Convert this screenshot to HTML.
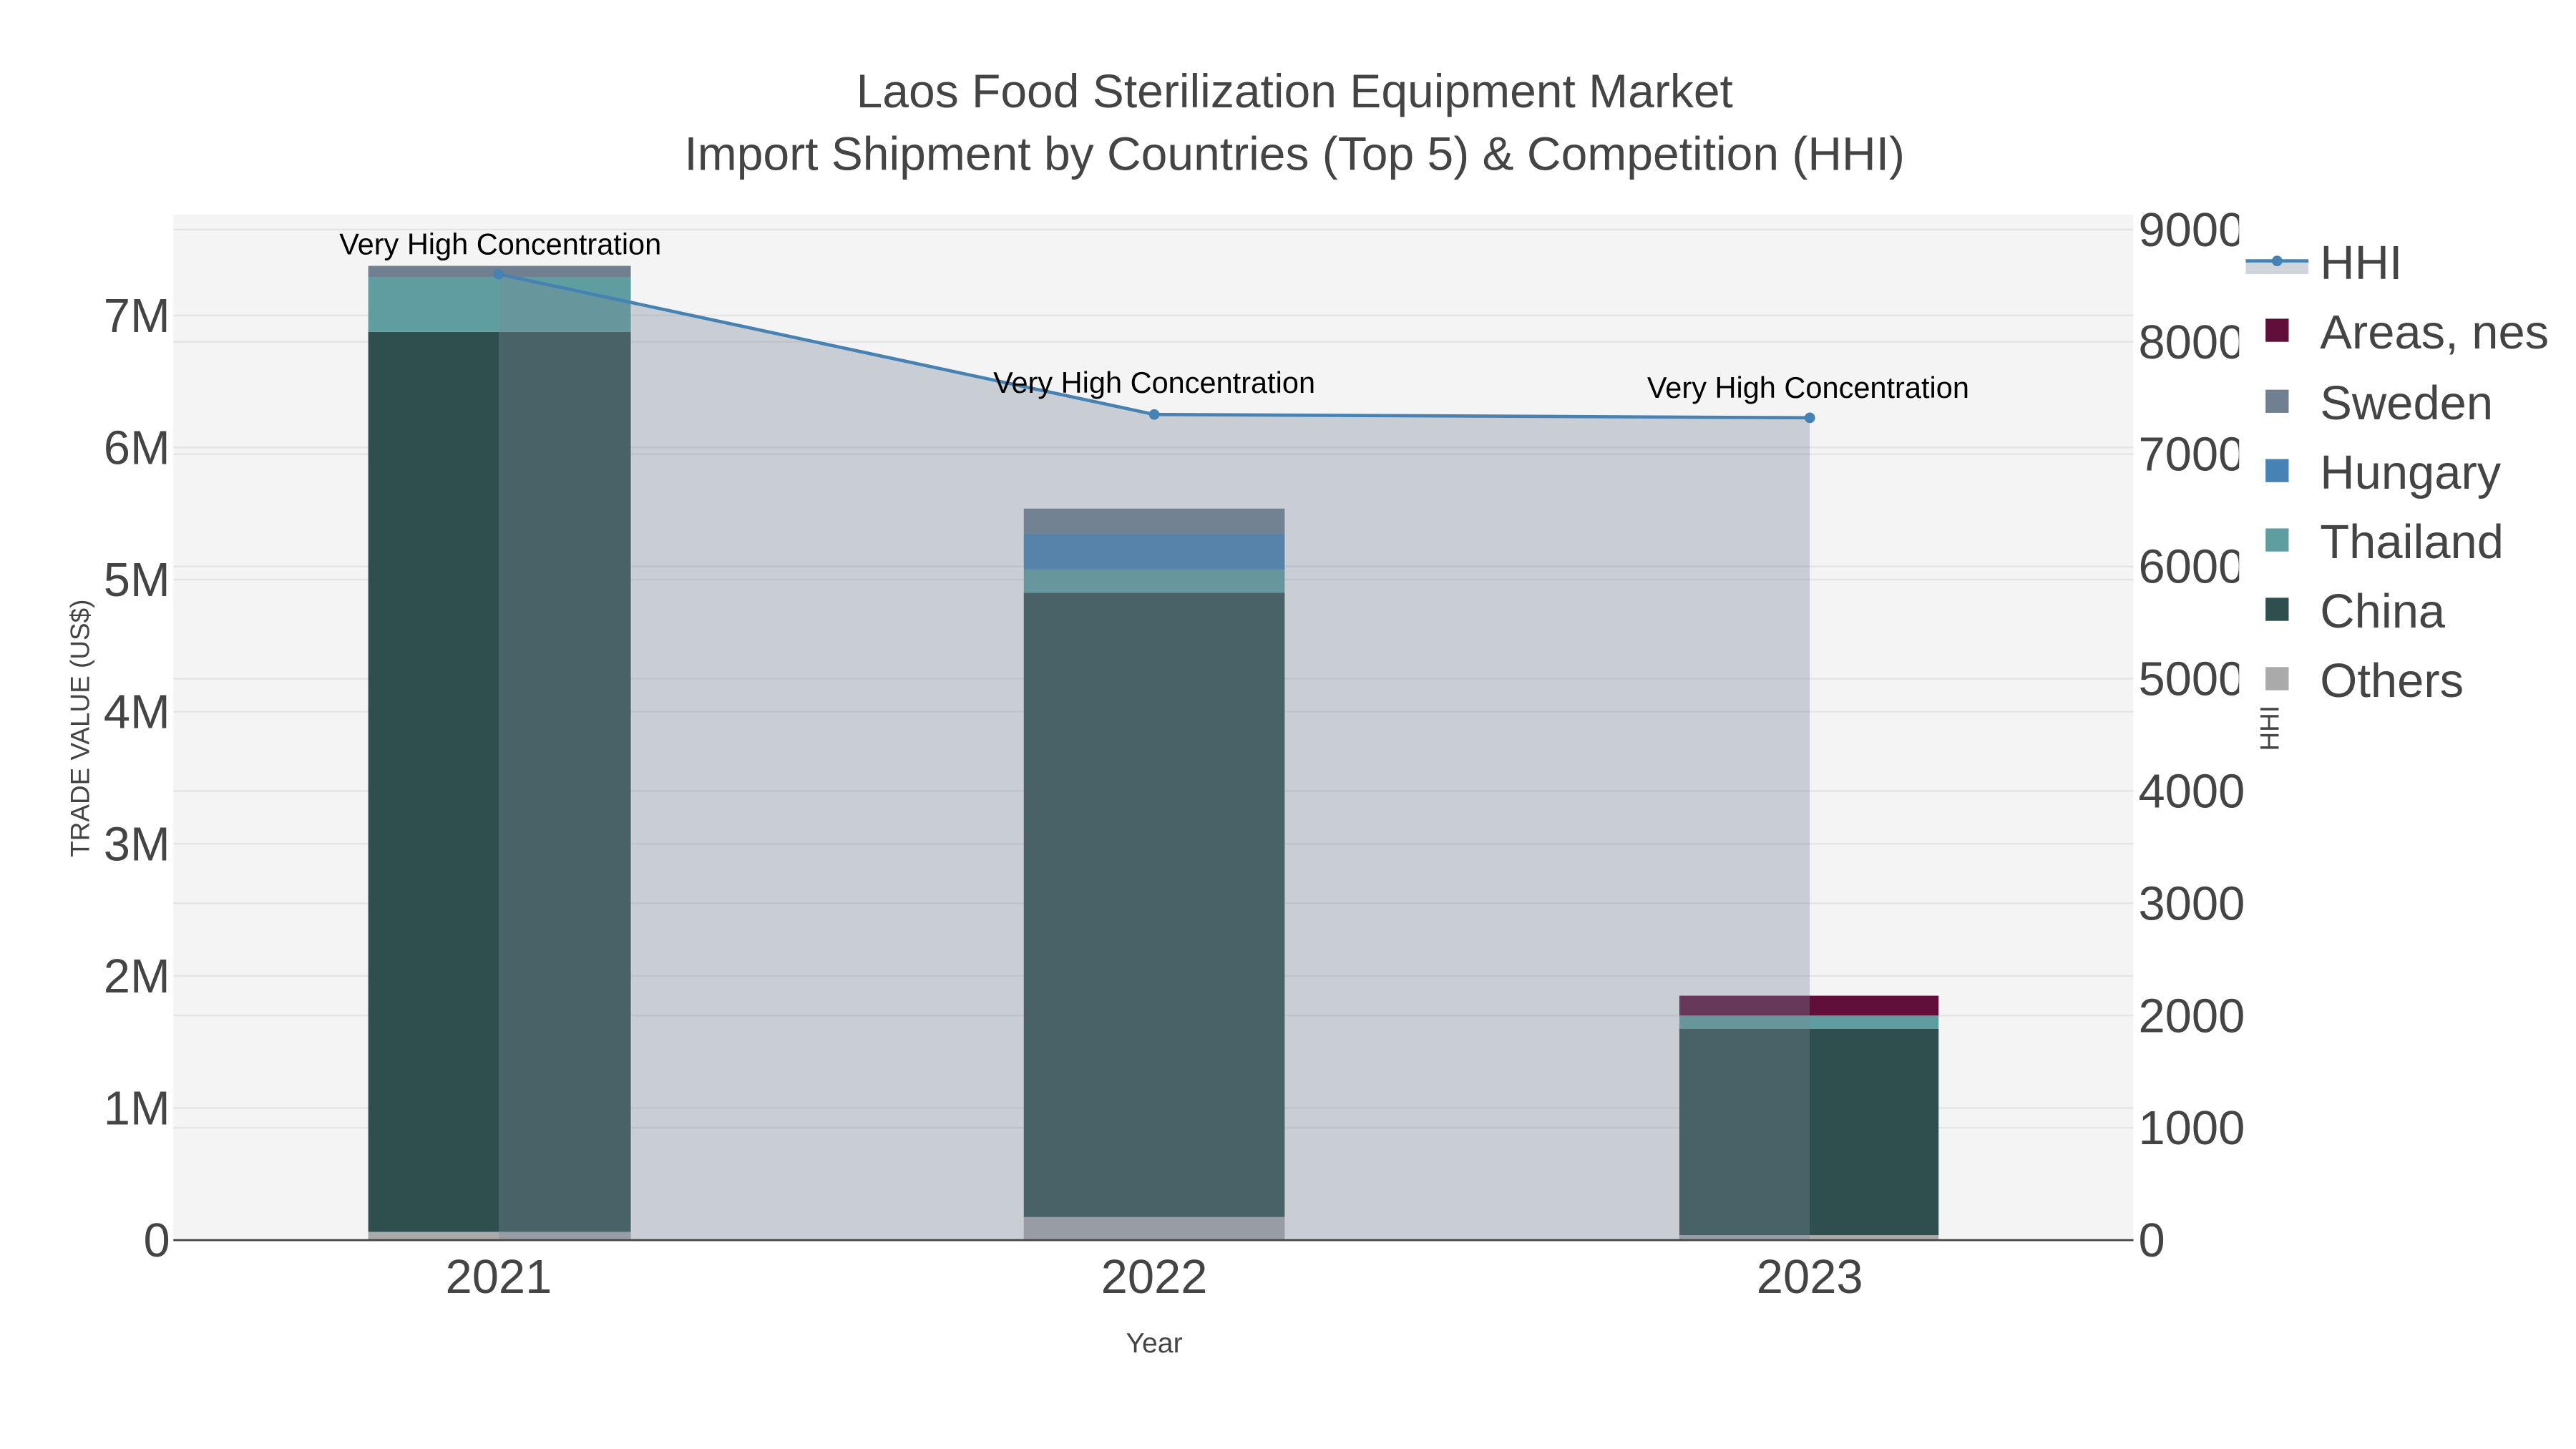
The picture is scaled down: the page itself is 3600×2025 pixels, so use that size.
<!DOCTYPE html>
<html><head><meta charset="utf-8"><style>
html,body{margin:0;padding:0;background:#fff;width:3600px;height:2025px;overflow:hidden}
svg{display:block}
text{font-family:"Liberation Sans",Arial,sans-serif}
</style></head><body>
<svg width="3600" height="2025" viewBox="0 0 1560 877.5" xmlns="http://www.w3.org/2000/svg">
<rect width="1560" height="877.5" fill="#fff"/>
<rect x="105" y="130" width="1187" height="621" fill="#f4f4f4"/>
<g stroke="#e4e4e4" stroke-width="1">
<line x1="105" x2="1292" y1="671" y2="671"/><line x1="105" x2="1292" y1="591" y2="591"/>
<line x1="105" x2="1292" y1="511" y2="511"/><line x1="105" x2="1292" y1="431" y2="431"/>
<line x1="105" x2="1292" y1="351" y2="351"/><line x1="105" x2="1292" y1="271" y2="271"/>
<line x1="105" x2="1292" y1="191" y2="191"/>
<line x1="105" x2="1292" y1="683" y2="683"/><line x1="105" x2="1292" y1="615" y2="615"/>
<line x1="105" x2="1292" y1="547" y2="547"/><line x1="105" x2="1292" y1="479" y2="479"/>
<line x1="105" x2="1292" y1="411" y2="411"/><line x1="105" x2="1292" y1="343" y2="343"/>
<line x1="105" x2="1292" y1="275" y2="275"/><line x1="105" x2="1292" y1="207" y2="207"/>
<line x1="105" x2="1292" y1="139" y2="139"/>
</g>
<rect x="223" y="746" width="159" height="5" fill="#aaaaaa"/>
<rect x="223" y="201" width="159" height="545" fill="#2f4f4f"/>
<rect x="223" y="168" width="159" height="33" fill="#5f9ea0"/>
<rect x="223" y="161" width="159" height="7" fill="#708090"/>
<rect x="620" y="737" width="158" height="14" fill="#aaaaaa"/>
<rect x="620" y="359" width="158" height="378" fill="#2f4f4f"/>
<rect x="620" y="345" width="158" height="14" fill="#5f9ea0"/>
<rect x="620" y="323" width="158" height="22" fill="#4682b4"/>
<rect x="620" y="308" width="158" height="15" fill="#708090"/>
<rect x="1017" y="748" width="157" height="3" fill="#aaaaaa"/>
<rect x="1017" y="623" width="157" height="125" fill="#2f4f4f"/>
<rect x="1017" y="615" width="157" height="8" fill="#5f9ea0"/>
<rect x="1017" y="603" width="157" height="12" fill="#5f0f3a"/>
<polygon points="302,166 699,251 1096,253 1096,751 302,751" fill="#778899" fill-opacity="0.35"/>
<polyline points="302,166 699,251 1096,253" fill="none" stroke="#4682b4" stroke-width="2"/>
<circle cx="302" cy="166" r="3.2" fill="#4682b4"/><circle cx="699" cy="251" r="3.2" fill="#4682b4"/><circle cx="1096" cy="253" r="3.2" fill="#4682b4"/>
<line x1="105" x2="1292" y1="751" y2="751" stroke="#444" stroke-width="1.2"/>
<g font-size="18" fill="#000" text-anchor="middle">
<text x="303" y="154">Very High Concentration</text>
<text x="699" y="238">Very High Concentration</text>
<text x="1095" y="241">Very High Concentration</text>
</g>
<g font-size="28.6" fill="#444" text-anchor="middle">
<text x="784" y="65">Laos Food Sterilization Equipment Market</text>
<text x="784" y="103">Import Shipment by Countries (Top 5) &amp; Competition (HHI)</text>
</g>
<g font-size="29" fill="#444" text-anchor="end">
<text x="103" y="761">0</text><text x="103" y="681">1M</text><text x="103" y="601">2M</text>
<text x="103" y="521">3M</text><text x="103" y="441">4M</text><text x="103" y="361">5M</text>
<text x="103" y="281">6M</text><text x="103" y="201">7M</text>
</g>
<g font-size="29" fill="#444">
<text x="1295" y="761">0</text><text x="1295" y="693">1000</text><text x="1295" y="625">2000</text>
<text x="1295" y="557">3000</text><text x="1295" y="489">4000</text><text x="1295" y="421">5000</text>
<text x="1295" y="353">6000</text><text x="1295" y="285">7000</text><text x="1295" y="217">8000</text>
<text x="1295" y="149">9000</text>
</g>
<g font-size="29" fill="#444" text-anchor="middle">
<text x="302" y="783">2021</text><text x="699" y="783">2022</text><text x="1096" y="783">2023</text>
</g>
<text x="699" y="819" font-size="17" fill="#444" text-anchor="middle">Year</text>
<text transform="translate(54,441) rotate(-90)" font-size="16" fill="#444" text-anchor="middle">TRADE VALUE (US$)</text>
<rect x="1356" y="130" width="204" height="300" fill="#fff"/>
<text transform="translate(1380,441) rotate(-90)" font-size="16" fill="#444" text-anchor="middle">HHI</text>
<rect x="1360" y="158" width="38" height="8" fill="#778899" fill-opacity="0.35"/>
<line x1="1360" x2="1398" y1="158" y2="158" stroke="#4682b4" stroke-width="2"/>
<circle cx="1379" cy="158" r="3.2" fill="#4682b4"/>
<rect x="1372" y="193" width="14" height="14" fill="#5f0f3a"/>
<rect x="1372" y="236" width="14" height="14" fill="#708090"/>
<rect x="1372" y="278" width="14" height="14" fill="#4682b4"/>
<rect x="1372" y="320" width="14" height="14" fill="#5f9ea0"/>
<rect x="1372" y="362" width="14" height="14" fill="#2f4f4f"/>
<rect x="1372" y="404" width="14" height="14" fill="#aaaaaa"/>
<g font-size="29" fill="#444">
<text x="1405" y="169">HHI</text><text x="1405" y="211">Areas, nes</text>
<text x="1405" y="254">Sweden</text><text x="1405" y="296">Hungary</text>
<text x="1405" y="338">Thailand</text><text x="1405" y="380">China</text>
<text x="1405" y="422">Others</text>
</g>
</svg>
</body></html>
